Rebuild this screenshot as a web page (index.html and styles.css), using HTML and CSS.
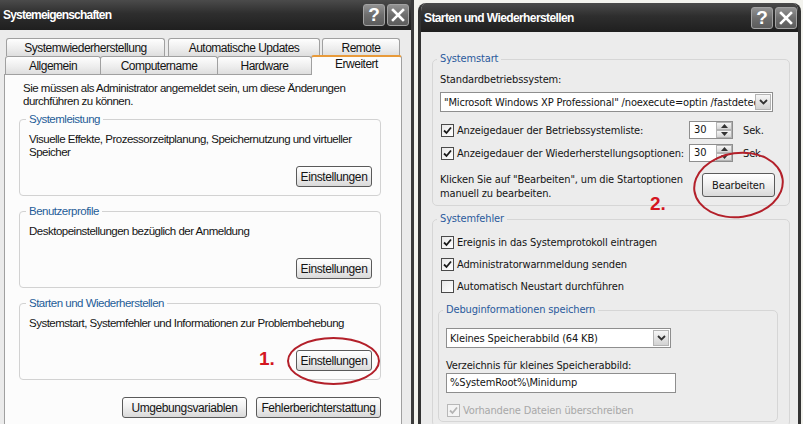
FILE: index.html
```html
<!DOCTYPE html>
<html lang="de">
<head>
  <meta charset="UTF-8">
  <meta name="viewport" content="width=device-width, initial-scale=1.0">
  <title>Systemeigenschaften</title>
  <link rel="stylesheet" href="styles.css">
</head>
<body>

<div class="desktop">

  <!-- Fenster 1 : Systemeigenschaften -->
  <div class="window win-sys">
    <div class="titlebar">
      <span class="title">Systemeigenschaften</span>
      <div class="caption-btns">
        <span class="cap-btn">?</span>
        <span class="cap-btn">
          <svg width="14" height="14" viewBox="0 0 14 14"><path d="M2 2 L12 12 M12 2 L2 12" stroke="#fff" stroke-width="2.6" stroke-linecap="square"/></svg>
        </span>
      </div>
    </div>

    <div class="tabs">
      <div class="tab-row">
        <span class="tab tab-restore">Systemwiederherstellung</span>
        <span class="tab tab-updates">Automatische Updates</span>
        <span class="tab tab-remote">Remote</span>
      </div>
      <div class="tab-row">
        <span class="tab tab-general">Allgemein</span>
        <span class="tab tab-name">Computername</span>
        <span class="tab tab-hardware">Hardware</span>
        <span class="tab tab-advanced">Erweitert</span>
      </div>
    </div>

    <div class="tab-panel">
      <p class="note">Sie müssen als Administrator angemeldet sein, um diese Änderungen<br>durchführen zu können.</p>

      <fieldset class="group">
        <legend>Systemleistung</legend>
        <p>Visuelle Effekte, Prozessorzeitplanung, Speichernutzung und virtueller<br>Speicher</p>
        <div class="btn-row"><button class="btn">Einstellungen</button></div>
      </fieldset>

      <fieldset class="group">
        <legend>Benutzerprofile</legend>
        <p>Desktopeinstellungen bezüglich der Anmeldung</p>
        <div class="btn-row"><button class="btn">Einstellungen</button></div>
      </fieldset>

      <fieldset class="group">
        <legend>Starten und Wiederherstellen</legend>
        <p>Systemstart, Systemfehler und Informationen zur Problembehebung</p>
        <div class="btn-row"><button class="btn">Einstellungen</button></div>
      </fieldset>

      <div class="btn-row footer-row">
        <button class="btn btn-wide">Umgebungsvariablen</button>
        <button class="btn btn-wide">Fehlerberichterstattung</button>
      </div>
    </div>

    <!-- Markierung 1 -->
    <span class="mark mark-one">1.</span>
    <span class="ring ring-one"></span>
  </div>

  <!-- Fenster 2 : Starten und Wiederherstellen -->
  <div class="window win-boot">
    <div class="titlebar">
      <span class="title">Starten und Wiederherstellen</span>
      <div class="caption-btns">
        <span class="cap-btn">?</span>
        <span class="cap-btn">
          <svg width="14" height="14" viewBox="0 0 14 14"><path d="M2 2 L12 12 M12 2 L2 12" stroke="#fff" stroke-width="2.6" stroke-linecap="square"/></svg>
        </span>
      </div>
    </div>

    <div class="boot-body">
      <fieldset class="boot-group group-start">
        <legend>Systemstart</legend>
        <div class="field-label">Standardbetriebssystem:</div>
        <div class="select select-os">
          <span class="select-text">"Microsoft Windows XP Professional" /noexecute=optin /fastdetect</span>
          <span class="drop-btn"><svg width="9" height="6" viewBox="0 0 9 6"><path d="M1 1 L4.5 4.5 L8 1" fill="none" stroke="#333" stroke-width="1.8"/></svg></span>
        </div>

        <div class="check-row row-first">
          <span class="check"><svg width="11" height="11" viewBox="0 0 11 11"><path d="M2 5.5 L4.5 8 L9 2.5" fill="none" stroke="#1b1b1b" stroke-width="1.8"/></svg></span>
          <span class="check-label">Anzeigedauer der Betriebssystemliste:</span>
          <span class="spinner">
            <span class="spin-value">30</span>
            <span class="spin-btns">
              <span class="spin-btn"><svg width="7" height="4" viewBox="0 0 7 4"><path d="M0 4 L3.5 0 L7 4 Z" fill="#333"/></svg></span>
              <span class="spin-btn"><svg width="7" height="4" viewBox="0 0 7 4"><path d="M0 0 L3.5 4 L7 0 Z" fill="#333"/></svg></span>
            </span>
          </span>
          <span class="unit">Sek.</span>
        </div>

        <div class="check-row">
          <span class="check"><svg width="11" height="11" viewBox="0 0 11 11"><path d="M2 5.5 L4.5 8 L9 2.5" fill="none" stroke="#1b1b1b" stroke-width="1.8"/></svg></span>
          <span class="check-label">Anzeigedauer der Wiederherstellungsoptionen:</span>
          <span class="spinner">
            <span class="spin-value">30</span>
            <span class="spin-btns">
              <span class="spin-btn"><svg width="7" height="4" viewBox="0 0 7 4"><path d="M0 4 L3.5 0 L7 4 Z" fill="#333"/></svg></span>
              <span class="spin-btn"><svg width="7" height="4" viewBox="0 0 7 4"><path d="M0 0 L3.5 4 L7 0 Z" fill="#333"/></svg></span>
            </span>
          </span>
          <span class="unit">Sek.</span>
        </div>

        <div class="edit-row">
          <p>Klicken Sie auf "Bearbeiten", um die Startoptionen<br>manuell zu bearbeiten.</p>
          <button class="btn btn-edit">Bearbeiten</button>
        </div>
      </fieldset>

      <fieldset class="boot-group group-errors">
        <legend>Systemfehler</legend>
        <div class="check-line line-first">
          <span class="check"><svg width="11" height="11" viewBox="0 0 11 11"><path d="M2 5.5 L4.5 8 L9 2.5" fill="none" stroke="#1b1b1b" stroke-width="1.8"/></svg></span>
          Ereignis in das Systemprotokoll eintragen
        </div>
        <div class="check-line">
          <span class="check"><svg width="11" height="11" viewBox="0 0 11 11"><path d="M2 5.5 L4.5 8 L9 2.5" fill="none" stroke="#1b1b1b" stroke-width="1.8"/></svg></span>
          Administratorwarnmeldung senden
        </div>
        <div class="check-line">
          <span class="check"></span>
          Automatisch Neustart durchführen
        </div>

        <fieldset class="boot-group group-debug">
          <legend>Debuginformationen speichern</legend>
          <div class="select select-dump">
            <span class="select-text">Kleines Speicherabbild (64 KB)</span>
            <span class="drop-btn"><svg width="9" height="6" viewBox="0 0 9 6"><path d="M1 1 L4.5 4.5 L8 1" fill="none" stroke="#333" stroke-width="1.8"/></svg></span>
          </div>
          <div class="field-label dir-label">Verzeichnis für kleines Speicherabbild:</div>
          <div class="text-input">%SystemRoot%\Minidump</div>
          <div class="check-line line-disabled">
            <span class="check check-disabled"><svg width="11" height="11" viewBox="0 0 11 11"><path d="M2 5.5 L4.5 8 L9 2.5" fill="none" stroke="#b4b4b4" stroke-width="1.8"/></svg></span>
            Vorhandene Dateien überschreiben
          </div>
        </fieldset>
      </fieldset>
    </div>

    <!-- Markierung 2 -->
    <span class="mark mark-two">2.</span>
    <span class="ring ring-two"></span>
  </div>

</div>

</body>
</html>
```

FILE: styles.css
```css
* {
  box-sizing: border-box;
}

body {
  margin: 0;
  background: #f3f3ee;
  font-family: "Liberation Sans", Arial, sans-serif;
  font-size: 12px;
  color: #141414;
  overflow: hidden;
}

.desktop {
  display: flex;
  align-items: flex-start;
  width: 803px;
  height: 424px;
  overflow: hidden;
}

/* Fenster */
.window {
  position: relative;
  display: flex;
  flex-direction: column;
  flex-shrink: 0;
  background: #ebebeb;
  overflow: hidden;
}

.win-sys {
  width: 414px;
  height: 424px;
  border-right: 3px solid #3b3b3b;
  font-size: 11.5px;
  letter-spacing: -0.5px;
}

.win-boot {
  width: 383px;
  height: 421px;
  margin: 3px 0 0 4px;
  border-left: 3px solid #333;
  border-right: 3px solid #333;
  border-radius: 8px 8px 0 0;
  background: #ececec;
  font-family: "DejaVu Sans Condensed", "DejaVu Sans", sans-serif;
  font-stretch: condensed;
  font-size: 11px;
  letter-spacing: -0.15px;
}

.titlebar {
  display: flex;
  align-items: center;
  justify-content: space-between;
  height: 30px;
  padding: 0 2px 0 3px;
  background: linear-gradient(#4b4b4b, #2e2e2e 45%, #1f1f1f);
  color: #fff;
  flex-shrink: 0;
}

.win-boot .titlebar {
  height: 29px;
  padding: 0 1px 0 3px;
}

.title {
  font-family: "Liberation Sans", Arial, sans-serif;
  font-stretch: normal;
  font-weight: bold;
  font-size: 12px;
  letter-spacing: -0.8px;
}

.win-boot .title {
  letter-spacing: -0.6px;
}

.caption-btns {
  display: flex;
  gap: 2px;
}

.cap-btn {
  display: flex;
  align-items: center;
  justify-content: center;
  width: 22px;
  height: 22px;
  border: 1px solid #a2a2a2;
  border-radius: 3px;
  background: linear-gradient(#929292, #6e6e6e 50%, #5c5c5c);
  font: bold 19px "Liberation Sans", Arial, sans-serif;
  letter-spacing: 0;
  color: #fff;
}

/* Registerkarten */
.tabs {
  padding: 8px 0 0 5px;
}

.tab-row {
  display: flex;
  height: 18px;
}

.tab {
  display: flex;
  align-items: center;
  justify-content: center;
  height: 18px;
  border: 1px solid #a0a0a0;
  border-bottom: 0;
  border-radius: 3px 3px 0 0;
  background: linear-gradient(#fefefe, #ececec 60%, #dedede);
  font-size: 12px;
}

.tab-restore { width: 159px; margin-left: 1px; }
.tab-updates { width: 152px; margin-left: 3px; }
.tab-remote { width: 78px; margin-left: 2px; }
.tab-general { width: 96px; }
.tab-name { width: 118px; margin-left: -1px; }
.tab-hardware { width: 95px; margin-left: -1px; }

.tab-advanced {
  position: relative;
  z-index: 1;
  width: 91px;
  height: 20px;
  margin: -1px 0 0 -1px;
  padding-bottom: 4px;
  background: #fcfcfc;
  border-top: 2px solid #e89a3a;
}

.tab-panel {
  flex: 1;
  margin: 0 9px 0 4px;
  padding: 7px 20px 0 14px;
  background: #fcfcfc;
  border: 1px solid #a0a0a0;
  border-bottom: 0;
}

.note {
  margin: 0;
  padding-left: 4px;
  line-height: 13px;
}

.group {
  margin: 8px 0 0;
  padding: 0 8px 8px 9px;
  border: 1px solid #d2d2d2;
  border-radius: 4px;
  min-width: 0;
}

.note + .group {
  margin-top: 4px;
}

.group legend {
  padding: 0 3px;
  margin-left: -3px;
  line-height: 14px;
  color: #1f5c98;
}

.group p {
  margin: 7px 0 0;
  height: 26px;
  line-height: 13px;
}

.btn-row {
  display: flex;
  justify-content: flex-end;
  gap: 9px;
  margin-top: 7px;
}

.footer-row {
  margin-top: 17px;
}

.btn {
  width: 76px;
  height: 21px;
  padding: 0;
  border: 1px solid #5a5a5a;
  border-radius: 3px;
  background: linear-gradient(#ffffff, #f1f1f1 45%, #d9d9d9);
  font-family: inherit;
  font-size: 12px;
  letter-spacing: -0.4px;
  color: #141414;
}

.btn-wide {
  width: 125px;
}

/* Starten und Wiederherstellen */
.boot-body {
  padding: 20px 8px 0 11px;
}

.boot-group {
  margin: 0;
  padding: 0 8px 4px 7px;
  border: 1px solid #d6d6d6;
  border-radius: 5px;
  min-width: 0;
}

.boot-group legend {
  padding: 0 3px;
  margin-left: -3px;
  line-height: 14px;
  color: #2a5a9c;
}

.group-errors {
  margin-top: 6px;
}

.group-debug {
  margin: 10px 3px 0 -2px;
}

.field-label {
  margin-top: 7px;
  line-height: 14px;
}

.select {
  display: flex;
  align-items: center;
  height: 20px;
  padding-left: 3px;
  border: 1px solid #8e8e8e;
  background: #fff;
}

.select-text {
  flex: 1;
  overflow: hidden;
  white-space: nowrap;
}

.select-os {
  width: 333px;
  margin-top: 5px;
}

.select-dump {
  width: 225px;
  margin-top: 11px;
}

.drop-btn {
  display: flex;
  align-items: center;
  justify-content: center;
  width: 16px;
  height: 16px;
  margin-right: 1px;
  border: 1px solid #b4b4b4;
  background: linear-gradient(#f6f6f6, #d2d2d2);
}

.check-row {
  display: flex;
  align-items: center;
  height: 20px;
  margin-top: 3px;
}

.row-first {
  margin-top: 8px;
}

.check {
  display: flex;
  align-items: center;
  justify-content: center;
  width: 13px;
  height: 13px;
  margin: 0 3px 0 1px;
  border: 1px solid #4a4a4a;
  background: linear-gradient(135deg, #e8e8e8, #ffffff);
  flex-shrink: 0;
}

.check-label {
  flex: 1;
}

.spinner {
  display: flex;
  width: 44px;
  height: 18px;
  border: 1px solid #8e8e8e;
  background: #fff;
}

.spin-value {
  flex: 1;
  padding-left: 4px;
  line-height: 16px;
}

.spin-btns {
  display: flex;
  flex-direction: column;
  width: 16px;
}

.spin-btn {
  display: flex;
  align-items: center;
  justify-content: center;
  height: 8px;
  border: 1px solid #b4b4b4;
  background: linear-gradient(#f6f6f6, #d4d4d4);
}

.unit {
  width: 48px;
  padding-left: 10px;
}

.edit-row {
  display: flex;
  align-items: flex-start;
  margin-top: 10px;
}

.edit-row p {
  flex: 1;
  margin: 0;
  line-height: 14px;
}

.btn-edit {
  width: 73px;
  height: 24px;
  margin-right: 6px;
  font-size: 11px;
  letter-spacing: -0.15px;
}

.check-line {
  display: flex;
  align-items: center;
  height: 14px;
  margin-top: 8px;
}

.line-first {
  margin-top: 9px;
}

.dir-label {
  margin-top: 11px;
}

.text-input {
  width: 230px;
  height: 20px;
  padding-left: 3px;
  border: 1px solid #8e8e8e;
  background: #fff;
  line-height: 18px;
}

.line-disabled {
  margin-top: 10px;
  color: #a8a8a8;
}

.check-disabled {
  border-color: #b8b8b8;
  background: #f4f4f4;
}

/* Rote Markierungen */
.mark {
  position: absolute;
  z-index: 2;
  font: bold 19px "Liberation Sans", Arial, sans-serif;
  letter-spacing: 0;
  color: #d4161f;
}

.mark-one {
  left: 259px;
  top: 348px;
}

.mark-two {
  left: 229px;
  top: 190px;
}

.ring {
  position: absolute;
  z-index: 2;
  border: 2px solid #b3202a;
  border-radius: 50%;
}

.ring-one {
  left: 287px;
  top: 337px;
  width: 93px;
  height: 48px;
}

.ring-two {
  left: 272px;
  top: 149px;
  width: 91px;
  height: 66px;
  transform: rotate(-8deg);
}
```
